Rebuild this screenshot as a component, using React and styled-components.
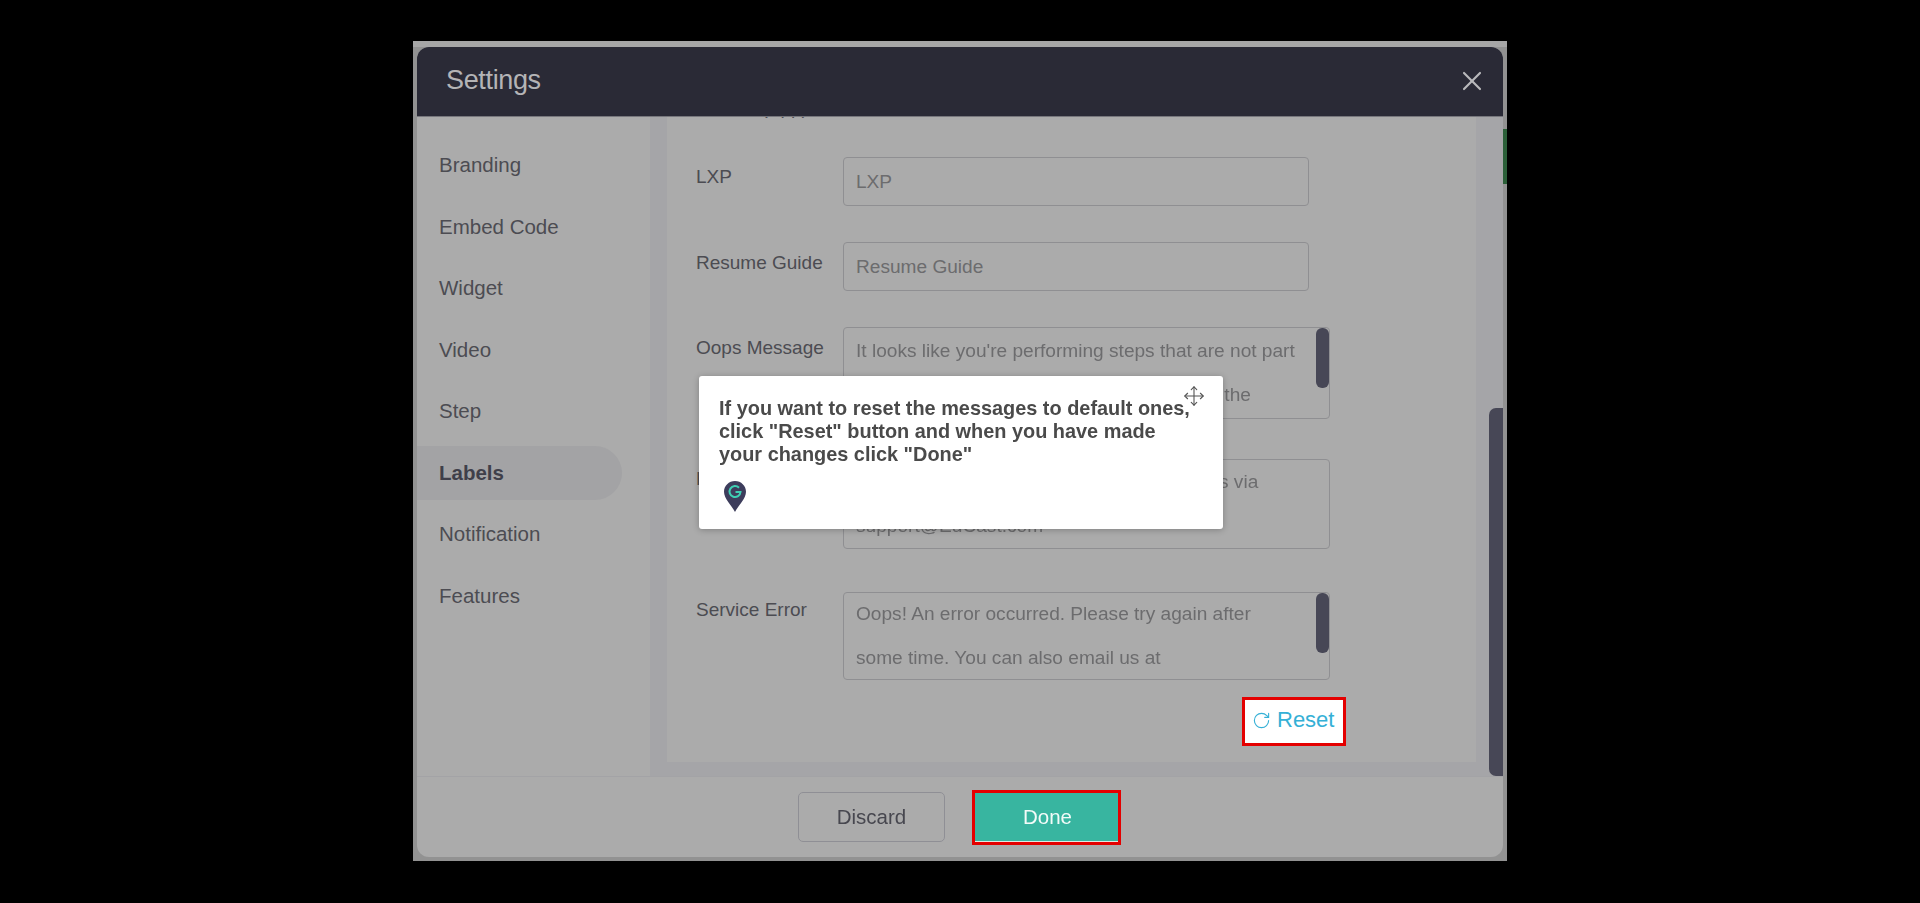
import React from "react";
import styled, { createGlobalStyle } from "styled-components";
import { Move, RotateCw, X } from "lucide-react";

const GlobalStyle = createGlobalStyle`
	html, body {
		margin: 0;
		height: 100%;
		background: #000;
		overflow: hidden;
		font-family: "Liberation Sans", Arial, sans-serif;
	}
`;

const Page = styled.div`
	height: 903px;
	display: flex;
	justify-content: center;
	align-items: flex-start;
	padding-top: 41px;
	box-sizing: border-box;
	background: #000;
`;

const Frame = styled.div`
	position: relative;
	width: 1094px;
	height: 820px;
	box-sizing: border-box;
	padding: 0 4px 4px;
	background: #929292;
	border-top: 6px solid #a6a6a6;
`;

const GreenEdge = styled.div`
	position: absolute;
	top: 82px;
	right: 0;
	width: 4px;
	height: 55px;
	background: #2b5f38;
`;

const Dialog = styled.div`
	height: 810px;
	display: flex;
	flex-direction: column;
	background: #ababab;
	border-radius: 12px;
	overflow: hidden;
	filter: blur(0.4px);
`;

const Header = styled.header`
	flex: 0 0 70px;
	display: flex;
	align-items: center;
	justify-content: space-between;
	padding: 0 15px 2px 29px;
	background: #2a2a36;
	border-bottom: 1px solid #77777d;
	box-sizing: border-box;
`;

const Title = styled.h2`
	margin: 0;
	font-size: 27px;
	font-weight: 400;
	letter-spacing: -0.35px;
	color: #b4b4b6;
`;

const CloseButton = styled.button`
	display: flex;
	padding: 0;
	border: none;
	background: none;
	color: #b9b9bb;
`;

const Body = styled.div`
	flex: 0 0 659px;
	display: grid;
	grid-template-columns: 233px 17px 809px 27px;
	grid-template-rows: 645px 14px;
	background: #a5a5a8;
`;

const Sidebar = styled.nav`
	grid-row: 1 / 3;
	display: flex;
	flex-direction: column;
	padding-top: 21px;
	background: #ababab;
`;

const NavItem = styled.div`
	height: 54px;
	margin-bottom: 7.5px;
	padding-left: 22px;
	display: flex;
	align-items: center;
	width: 205px;
	box-sizing: border-box;
	font-size: 20.5px;
	font-weight: ${(p) => (p.$active ? 700 : 400)};
	color: ${(p) => (p.$active ? "#3f3f4a" : "#4c4c52")};
	background: ${(p) => (p.$active ? "#a3a3a5" : "transparent")};
	border-radius: 0 27px 27px 0;
`;

const Panel = styled.section`
	grid-column: 3;
	background: #ababab;
	overflow: hidden;
	padding-left: 29px;
	box-sizing: border-box;
`;

const ClippedRow = styled.div`
	margin-top: -20px;
	height: 60px;
	font-size: 19px;
	line-height: 22px;
	color: #4c4c52;
`;

const Row = styled.div`
	display: flex;
	align-items: flex-start;
	margin-bottom: ${(p) => p.$gap}px;
`;

const Label = styled.label`
	flex: 0 0 147px;
	margin-top: ${(p) => p.$top || 9}px;
	font-size: 19px;
	line-height: 22px;
	color: #4c4c52;
`;

const TextInput = styled.input`
	width: 466px;
	height: 49px;
	box-sizing: border-box;
	padding: 0 12px;
	border: 1px solid #8f8f92;
	border-radius: 4px;
	background: transparent;
	font: 19.1px "Liberation Sans", Arial, sans-serif;
	outline: none;

	&::placeholder {
		color: #6c6c6e;
		opacity: 1;
	}
`;

const TextBox = styled.div`
	position: relative;
	width: 487px;
	height: ${(p) => p.$height}px;
	box-sizing: border-box;
	padding-left: 12px;
	border: 1px solid #8f8f92;
	border-radius: 4px;
	overflow: hidden;
	font-size: 19.1px;
	line-height: 44px;
	white-space: nowrap;
	color: #6c6c6e;
`;

const BoxText = styled.div`
	margin-top: ${(p) => p.$shift || 0}px;
`;

const BoxThumb = styled.div`
	position: absolute;
	top: 0;
	right: 0;
	width: 13px;
	height: 60px;
	border-radius: 6px;
	background: #474756;
`;

const ResetRow = styled.div`
	display: flex;
	justify-content: flex-end;
	padding-right: 130px;
	margin-top: -26px;
`;

const ResetButton = styled.button`
	width: 104px;
	height: 49px;
	box-sizing: border-box;
	display: flex;
	align-items: center;
	gap: 6px;
	padding: 0 0 3px 7px;
	border: 3px solid #e40000;
	background: #fff;
	color: #35b0d6;
	font: 22px "Liberation Sans", Arial, sans-serif;
`;

const ScrollTrack = styled.div`
	grid-column: 4;
	grid-row: 1 / 3;
	display: flex;
	justify-content: flex-end;
`;

const ScrollThumb = styled.div`
	width: 14px;
	height: 368px;
	margin-top: 291px;
	border-radius: 7px 0 0 7px;
	background: #474756;
`;

const Footer = styled.footer`
	flex: 1;
	display: flex;
	align-items: center;
	justify-content: center;
	gap: 27px;
	box-sizing: border-box;
	border-top: 1px solid #a3a3a6;
`;

const DiscardButton = styled.button`
	width: 147px;
	height: 50px;
	margin-left: -1px;
	border: 1px solid #8f8f95;
	border-radius: 5px;
	background: transparent;
	color: #47474f;
	font: 20.5px "Liberation Sans", Arial, sans-serif;
`;

const DoneButton = styled.button`
	width: 149px;
	height: 55px;
	padding: 0 0 0 2px;
	border: 3px solid #e40000;
	background: #38b5a0;
	box-shadow: inset 0 -1px 0 #dfe9e2;
	color: #f2fbf8;
	font: 20.5px "Liberation Sans", Arial, sans-serif;
`;

const Popup = styled.div`
	position: absolute;
	top: 329px;
	left: 286px;
	width: 524px;
	height: 153px;
	box-sizing: border-box;
	padding: 21px 20px 0;
	background: #fff;
	border-radius: 3px;
	box-shadow: 0 1px 6px rgba(0, 0, 0, 0.25);
`;

const PopupText = styled.p`
	margin: 0;
	font-size: 19.9px;
	font-weight: 700;
	line-height: 23px;
	color: #4a4a4a;
`;

const MoveHandle = styled.div`
	position: absolute;
	top: 9px;
	right: 18px;
	display: flex;
	color: #555;
`;

const PinLogo = styled.svg`
	display: block;
	margin: 15px 0 0 5px;
`;

const NAV_ITEMS = ["Branding", "Embed Code", "Widget", "Video", "Step", "Labels", "Notification", "Features"];

export default function App() {
	return (
		<Page>
			<GlobalStyle />
			<Frame>
				<GreenEdge />
				<Dialog>
					<Header>
						<Title>Settings</Title>
						<CloseButton>
							<X size={32} strokeWidth={1.6} />
						</CloseButton>
					</Header>
					<Body>
						<Sidebar>
							{NAV_ITEMS.map((item) => (
								<NavItem key={item} $active={item === "Labels"}>
									{item}
								</NavItem>
							))}
						</Sidebar>
						<Panel>
							<ClippedRow>Guides (App)</ClippedRow>
							<Row $gap={36}>
								<Label>LXP</Label>
								<TextInput placeholder="LXP" />
							</Row>
							<Row $gap={36}>
								<Label $top={10}>Resume Guide</Label>
								<TextInput placeholder="Resume Guide" />
							</Row>
							<Row $gap={40}>
								<Label $top={10}>Oops Message</Label>
								<TextBox $height={92}>
									<BoxText $shift={1}>
										It looks like you're performing steps that are not part
										<br />
										of guide. Please go back and continue with the
									</BoxText>
									<BoxThumb />
								</TextBox>
							</Row>
							<Row $gap={43}>
								<Label>Help Message</Label>
								<TextBox $height={90}>
									<BoxText>
										If you have any questions, you can reach us via
										<br />
										support@EdCast.com
									</BoxText>
								</TextBox>
							</Row>
							<Row $gap={43}>
								<Label $top={7}>Service Error</Label>
								<TextBox $height={88}>
									<BoxText $shift={-1}>
										Oops! An error occurred. Please try again after
										<br />
										some time. You can also email us at
									</BoxText>
									<BoxThumb />
								</TextBox>
							</Row>
							<ResetRow>
								<ResetButton>
									<RotateCw size={19} strokeWidth={1.4} />
									Reset
								</ResetButton>
							</ResetRow>
						</Panel>
						<ScrollTrack>
							<ScrollThumb />
						</ScrollTrack>
					</Body>
					<Footer>
						<DiscardButton>Discard</DiscardButton>
						<DoneButton>Done</DoneButton>
					</Footer>
				</Dialog>
				<Popup>
					<PopupText>
						If you want to reset the messages to default ones, click "Reset" button and when you have made your
						changes click "Done"
					</PopupText>
					<PinLogo width="22" height="31" viewBox="0 0 22 31">
						<path d="M11 0C4.9 0 0 4.8 0 10.8c0 7 7.6 13.6 11 20.2 3.4-6.6 11-13.2 11-20.2C22 4.8 17.1 0 11 0z" fill="#3d3d5c" />
						<path d="M15 6.8A5.5 5.5 0 1 0 16.5 11H11.5" fill="none" stroke="#3fd0b4" strokeWidth="2" />
					</PinLogo>
					<MoveHandle>
						<Move size={22} strokeWidth={1.2} />
					</MoveHandle>
				</Popup>
			</Frame>
		</Page>
	);
}
